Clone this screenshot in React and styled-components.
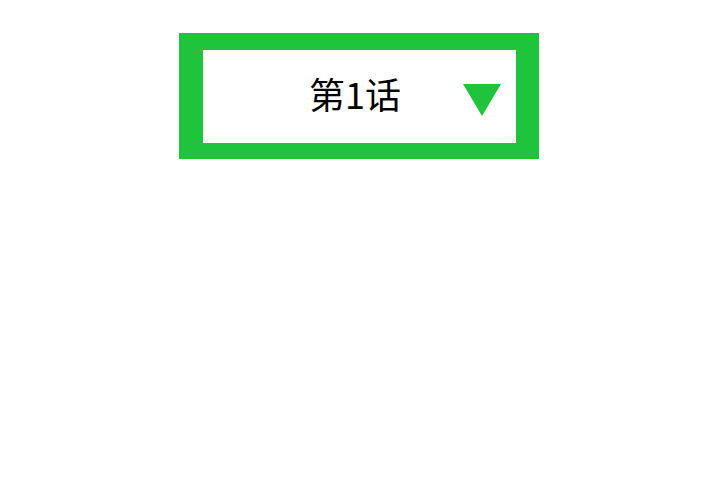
import React from 'react'
import styled, { createGlobalStyle } from 'styled-components'

const GlobalStyle = createGlobalStyle`
  html, body {
    margin: 0;
    padding: 0;
    background: #ffffff;
  }
  body {
    font-family: 'Noto Sans CJK SC', 'Noto Sans', sans-serif;
  }
`

const Page = styled.div`
  width: 720px;
  height: 500px;
  padding-top: 33px;
  box-sizing: border-box;
  display: flex;
  justify-content: flex-start;
  padding-left: 179px;
`

const Select = styled.div`
  width: 360px;
  height: 126px;
  box-sizing: border-box;
  border-style: solid;
  border-color: #20c33c;
  border-width: 17px 23px 16px 24px;
  background: #ffffff;
  display: flex;
  align-items: center;
  padding: 0 15px 0 106px;
`

const Label = styled.span`
  font-size: 36px;
  line-height: 1;
  color: #000000;
  margin-top: -7px;
`

const Arrow = styled.svg`
  margin-left: auto;
  margin-top: 7px;
  display: block;
`

const App = () => {
  return (
    <>
      <GlobalStyle />
      <Page>
        <Select>
          <Label>第1话</Label>
          <Arrow width='38' height='32' viewBox='0 0 38 32'>
            <polygon points='0,0 38,0 19,32' fill='#20c33c' />
          </Arrow>
        </Select>
      </Page>
    </>
  )
}

export default App
